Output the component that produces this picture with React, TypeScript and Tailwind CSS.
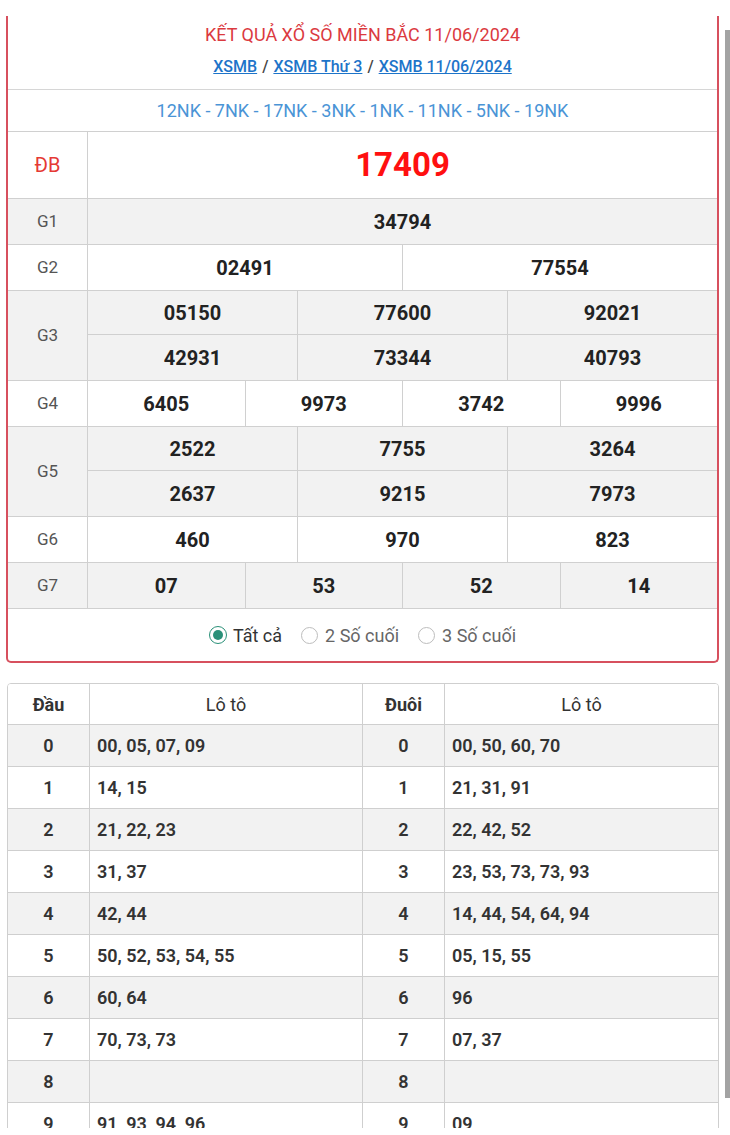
import React from "react";

const font = { fontFamily: "Roboto, 'Noto Sans', sans-serif" };

type Row = { label: string; cols: number; lines: string[][]; bg: string };

const rows: Row[] = [
  { label: "G1", cols: 1, lines: [["34794"]], bg: "bg-[#f2f2f2]" },
  { label: "G2", cols: 2, lines: [["02491", "77554"]], bg: "bg-white" },
  { label: "G3", cols: 3, lines: [["05150", "77600", "92021"], ["42931", "73344", "40793"]], bg: "bg-[#f2f2f2]" },
  { label: "G4", cols: 4, lines: [["6405", "9973", "3742", "9996"]], bg: "bg-white" },
  { label: "G5", cols: 3, lines: [["2522", "7755", "3264"], ["2637", "9215", "7973"]], bg: "bg-[#f2f2f2]" },
  { label: "G6", cols: 3, lines: [["460", "970", "823"]], bg: "bg-white" },
  { label: "G7", cols: 4, lines: [["07", "53", "52", "14"]], bg: "bg-[#f2f2f2]" },
];

const loto: [string, string, string, string][] = [
  ["0", "00, 05, 07, 09", "0", "00, 50, 60, 70"],
  ["1", "14, 15", "1", "21, 31, 91"],
  ["2", "21, 22, 23", "2", "22, 42, 52"],
  ["3", "31, 37", "3", "23, 53, 73, 73, 93"],
  ["4", "42, 44", "4", "14, 44, 54, 64, 94"],
  ["5", "50, 52, 53, 54, 55", "5", "05, 15, 55"],
  ["6", "60, 64", "6", "96"],
  ["7", "70, 73, 73", "7", "07, 37"],
  ["8", "", "8", ""],
  ["9", "91, 93, 94, 96", "9", "09"],
];

export default function App() {
  return (
    <div className="relative w-[730px] h-[1135px] overflow-hidden bg-white" style={font}>
      <div className="absolute right-0 top-[30px] h-[1068px] w-[5px] bg-[#a3a3a3]" />
      <div className="pt-[16px] pl-[6px] w-[719px]">
        {/* Result card */}
        <div className="border-x-2 border-b-2 border-[#d7505e] rounded-b-[5px]">
          <div className="flex flex-col items-center pt-[6px] pb-[11px] border-b border-[#d6d6d6]">
            <div className="text-[18px] leading-[25px] text-[#db3a3f]">
              KẾT QUẢ XỔ SỐ MIỀN BẮC 11/06/2024
            </div>
            <div className="mt-[9px] text-[16px] leading-[22px] font-medium text-[#2a2a2a]">
              <a className="text-[#1d74c9] underline">XSMB</a>
              <span className="text-[#444] px-[5px]">/</span>
              <a className="text-[#1d74c9] underline">XSMB Thứ 3</a>
              <span className="text-[#444] px-[5px]">/</span>
              <a className="text-[#1d74c9] underline">XSMB 11/06/2024</a>
            </div>
          </div>
          <div className="h-[42px] flex items-center justify-center text-[18px] text-[#4a94d6] border-b border-[#d0d0d0]">
            12NK - 7NK - 17NK - 3NK - 1NK - 11NK - 5NK - 19NK
          </div>
          {/* DB row */}
          <div className="flex h-[67px] border-b border-[#d0d0d0]">
            <div className="w-[80px] flex items-center justify-center text-[20px] text-[#e53935] border-r border-[#d0d0d0]">
              ĐB
            </div>
            <div className="flex-1 flex items-center justify-center text-[33px] font-bold text-[#ff1010]">
              17409
            </div>
          </div>
          {rows.map((r) => (
            <div key={r.label} className={`flex border-b border-[#d0d0d0] ${r.bg}`}>
              <div className="w-[80px] flex items-center justify-center text-[17px] text-[#555] border-r border-[#d0d0d0]">
                {r.label}
              </div>
              <div className="flex-1 flex flex-col">
                {r.lines.map((line, i) => (
                  <div
                    key={i}
                    className={`flex ${
                      i < r.lines.length - 1 ? "h-[44px] border-b border-[#d0d0d0]" : "h-[45px]"
                    }`}
                  >
                    {line.map((n, j) => (
                      <div
                        key={j}
                        className={`flex-1 flex items-center justify-center text-[20px] font-bold text-[#222] ${
                          j > 0 ? "border-l border-[#d0d0d0]" : ""
                        }`}
                      >
                        {n}
                      </div>
                    ))}
                  </div>
                ))}
              </div>
            </div>
          ))}
          {/* radios */}
          <div className="h-[52px] flex items-center justify-center gap-[19px] text-[18px]">
            <label className="flex items-center gap-[6px] text-[#333]">
              <span className="w-[18px] h-[18px] rounded-full border border-[#2a9078] flex items-center justify-center">
                <span className="w-[10px] h-[10px] rounded-full bg-[#2a9078]" />
              </span>
              Tất cả
            </label>
            <label className="flex items-center gap-[7px] text-[#666]">
              <span className="w-[17px] h-[17px] rounded-full border border-[#bdbdbd]" />
              2 Số cuối
            </label>
            <label className="flex items-center gap-[7px] text-[#666]">
              <span className="w-[17px] h-[17px] rounded-full border border-[#bdbdbd]" />
              3 Số cuối
            </label>
          </div>
        </div>

        {/* Loto table */}
        <div className="mt-[20px] ml-[1px] border border-[#cfcfcf] rounded-t-[4px] overflow-hidden">
          <div className="grid grid-cols-[82px_1fr_82px_1fr] h-[41px] bg-white border-b border-[#cfcfcf] text-[18px] text-[#333]">
            <div className="flex items-center justify-center font-bold border-r border-[#cfcfcf]">Đầu</div>
            <div className="flex items-center justify-center border-r border-[#cfcfcf]">Lô tô</div>
            <div className="flex items-center justify-center font-bold border-r border-[#cfcfcf]">Đuôi</div>
            <div className="flex items-center justify-center">Lô tô</div>
          </div>
          {loto.map((l, i) => (
            <div
              key={i}
              className={`grid grid-cols-[82px_1fr_82px_1fr] h-[42px] border-b border-[#cfcfcf] text-[18px] font-semibold text-[#333] ${
                i % 2 === 0 ? "bg-[#f2f2f2]" : "bg-white"
              }`}
            >
              <div className="flex items-center justify-center border-r border-[#cfcfcf]">{l[0]}</div>
              <div className="flex items-center pl-[7px] border-r border-[#cfcfcf]">{l[1]}</div>
              <div className="flex items-center justify-center border-r border-[#cfcfcf]">{l[2]}</div>
              <div className="flex items-center pl-[7px]">{l[3]}</div>
            </div>
          ))}
        </div>
      </div>
      <div className="absolute left-0 right-0 bottom-0 h-[7px] bg-white" />
    </div>
  );
}
